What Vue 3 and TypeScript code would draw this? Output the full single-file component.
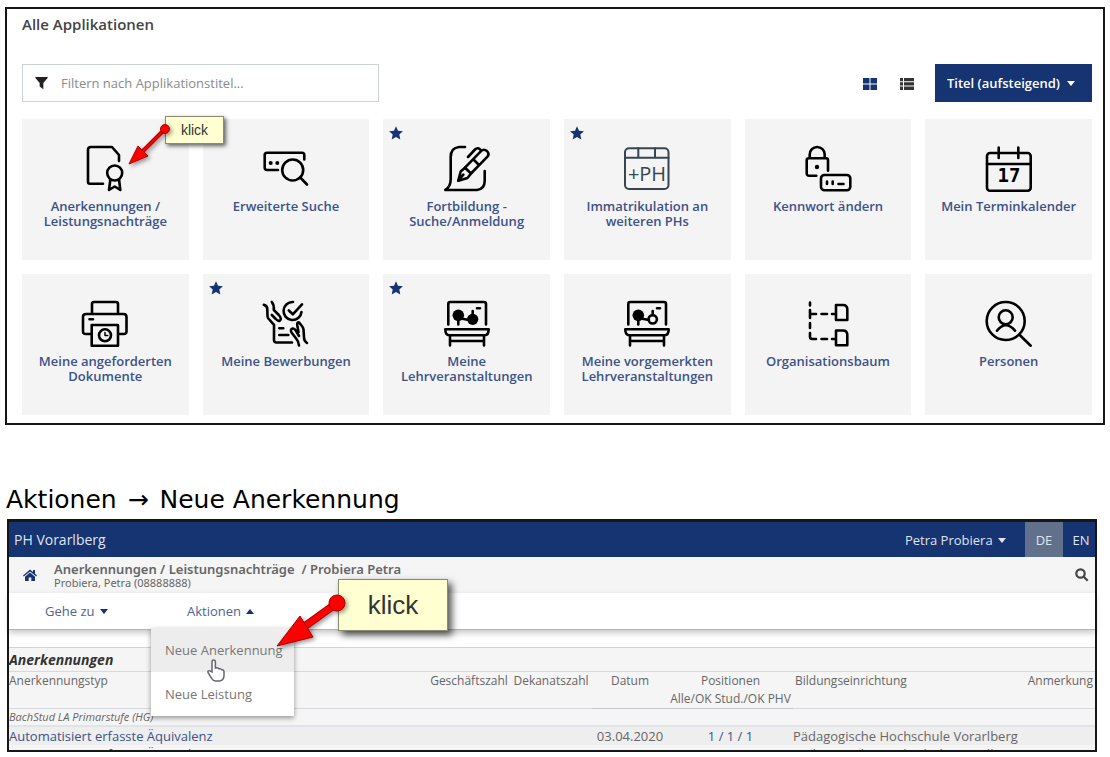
<script setup lang="ts">
import { ref } from 'vue'

interface App {
  icon: string
  lines: string[]
  favourite?: boolean
}

const apps: App[] = [
  { icon: 'certificate', lines: ['Anerkennungen /', 'Leistungsnachträge'] },
  { icon: 'search', lines: ['Erweiterte Suche'] },
  { icon: 'pen', lines: ['Fortbildung -', 'Suche/Anmeldung'], favourite: true },
  { icon: 'ph', lines: ['Immatrikulation an', 'weiteren PHs'], favourite: true },
  { icon: 'lock', lines: ['Kennwort ändern'] },
  { icon: 'calendar', lines: ['Mein Terminkalender'] },
  { icon: 'printer', lines: ['Meine angeforderten', 'Dokumente'] },
  { icon: 'hands', lines: ['Meine Bewerbungen'], favourite: true },
  { icon: 'board', lines: ['Meine', 'Lehrveranstaltungen'], favourite: true },
  { icon: 'board-marked', lines: ['Meine vorgemerkten', 'Lehrveranstaltungen'] },
  { icon: 'tree', lines: ['Organisationsbaum'] },
  { icon: 'person', lines: ['Personen'] },
]

const filter = ref('')
const sort = ref('asc')
</script>

<template>
  <main class="page">
    <section class="panel apps">
      <h1 class="apps-title">Alle Applikationen</h1>
      <div class="toolbar">
        <label class="filter">
          <svg class="funnel" viewBox="0 0 14 14" aria-hidden="true"><path d="M.4.6h13.2v1L9 7v6.6L5 10.800V7L.4 1.600z" /></svg>
          <input v-model="filter" type="text" placeholder="Filtern nach Applikationstitel..." aria-label="Filtern nach Applikationstitel" />
        </label>
        <button class="view active" type="button" aria-label="Kachelansicht">
          <svg viewBox="0 0 14 12"><path d="M0 0h6.500v5.500H0zM7.500 0H14v5.500H7.500zM0 6.500h6.500V12H0zM7.500 6.500H14V12H7.500z" /></svg>
        </button>
        <button class="view" type="button" aria-label="Listenansicht">
          <svg viewBox="0 0 14 12"><path d="M0 0h3v3.300H0zM4 0h10v3.300H4zM0 4.300h3v3.300H0zM4 4.300h10v3.300H4zM0 8.600h3V12H0zM4 8.600h10V12H4z" /></svg>
        </button>
        <div class="sort">
          <select v-model="sort" aria-label="Sortierung">
            <option value="asc">Titel (aufsteigend)</option>
            <option value="desc">Titel (absteigend)</option>
          </select>
          <svg class="caret" viewBox="0 0 8 5" aria-hidden="true"><path d="M0 0h8L4 5z" /></svg>
        </div>
      </div>

      <div class="tiles">
        <div v-for="(app, i) in apps" :key="app.icon" class="tile-wrap">
          <a class="tile" href="#">
            <svg v-if="app.favourite" class="star" viewBox="0 0 14 14" aria-hidden="true">
              <path d="M7 .2l2 4.500 4.900.5-3.600 3.300 1 4.900L7 11l-4.300 2.400 1-4.900L.1 5.200 5 4.700z" />
            </svg>
            <svg class="icon" viewBox="0 0 48 48" aria-hidden="true">
              <g v-if="app.icon === 'certificate'">
                <path d="M22 38.700H9Q7 38.700 7 36.700V5Q7 2 10 2h21l7 8v6" />
                <circle cx="33.700" cy="28" r="7.500" />
                <path d="M29.300 35L28 45l5.700-3.500L39.300 45l-1.200-10" />
              </g>
              <g v-else-if="app.icon === 'search'">
                <path d="M16 25H5Q2.700 25 2.700 22.700V10Q2.700 7.700 5 7.700h35q2.300 0 2.300 2.300v4.500" />
                <circle class="solid" cx="8.700" cy="18" r="2" /><circle class="solid" cx="15.300" cy="18" r="2" />
                <circle cx="30.700" cy="25" r="10.500" /><path d="M38.200 32.500L45 39.500" />
              </g>
              <g v-else-if="app.icon === 'pen'">
                <path d="M22 2h-6Q7.700 3 7.700 12v22q0 8-5.400 11H34q7.700-1 7.700-9V26" />
                <path d="M15.300 35.700l2.400-9.200 4.300-3.800 6 5.800-3.500 4.500z" />
                <path d="M22 22.700l16-16.500q3-3 6 0t0 6L28 28.500M25 12l7-7.500q3-3 6 1M30.500 14.500l5.500 5.500M15.300 35.700l5-6" />
              </g>
              <g v-else-if="app.icon === 'ph'" class="slate">
                <rect x="2" y="3.300" width="43.500" height="40.700" rx="4" /><path d="M2 12.700h43.500M15.300 3.300v9.400M32 3.300v9.400" />
                <text x="24" y="36" font-size="20">+PH</text>
              </g>
              <g v-else-if="app.icon === 'lock'">
                <path d="M5.700 13V9.500a7.500 7.500 0 0 1 15 0V13M12.300 30.700H5.200q-2.500 0-2.500-2.500v-13q0-1.900 2-1.900h17.500q1.800 0 1.800 1.900v10.500" />
                <circle class="solid" cx="13" cy="22" r="2.200" />
                <rect x="17" y="30" width="29.300" height="15.300" rx="3.500" />
                <path d="M23 36.500v2.500M28.700 36.500v2.500M34.500 39h5" />
              </g>
              <g v-else-if="app.icon === 'calendar'">
                <rect x="2" y="8" width="43.700" height="37.700" rx="3" /><path d="M2 19h43.700M13.700 2.500v10.500M33.300 2.500v10.500" />
                <text class="day" x="24" y="37" font-size="19">17</text>
              </g>
              <g v-else-if="app.icon === 'printer'">
                <path d="M11 13.500V4q0-2 2-2h22q2 0 2 2v9.500M10.500 34H4.800Q2 34 2 31.500V17q0-3 3-3h37.500q3 0 3 3v14.500q0 2.500-2.800 2.500h-5.200M8.500 19.300H12" />
                <path d="M10.700 25H37v20.700H10.700z" /><circle cx="24" cy="35.300" r="6" /><path class="thin" d="M24 32.500v3h2.700" />
              </g>
              <g v-else-if="app.icon === 'hands'">
                <path d="M1.800 4.800q3.500 1 3.500 4.500l.2 7q.3 2.500 2.500 4l4 4.500M9.800 2q2.500 3 2 8l5 5q3.500 4 1 5.700-2 .6-4-1.700l-4-4M12 24.500V40q0 2.500 2.500 2.500H30M17.300 28.300h4M17.300 35h9" />
                <path d="M31 2A9 9 0 1 0 39.500 12M26.800 10.500l4 3.800L40 4.300" />
                <path d="M45 43q-3-2-3-5.500l-.5-8q-.2-2-2-4l-2.600-3.300q-2 0-1.600 3l1.200 7M37 45.500q-.3-4-2.500-6.500l-5-6.500q-1.500-3 1-4 1.800-.4 3.300 2l3.200 5.500" />
              </g>
              <g v-else-if="app.icon === 'board' || app.icon === 'board-marked'">
                <path d="M5.300 24.500V4q0-2 2-2H41q2 0 2 2v20.500M34 8.300h3M15.300 15v9.500M18 18.500l8 1.500M29.700 11v4" />
                <circle class="solid" cx="15.300" cy="15.300" r="5.800" />
                <circle v-if="app.icon === 'board'" class="solid" cx="29.700" cy="19.300" r="5.600" />
                <circle v-else cx="29.700" cy="19.300" r="4.200" />
                <path d="M2.300 29.300h43.400q0 6-4 6H6.300q-4 0-4-6zM7 35.500v10M41 35.500v10M7 41h34" />
              </g>
              <g v-else-if="app.icon === 'tree'">
                <path d="M6 2.500v3M6 10v8M6 23v5M6 33v4q0 2 2.500 2H12M6.500 14H12M17.500 14h5.500M28 14h2.500M17.500 39h5.500M28 39h2.500" />
                <path d="M32 5h7q4.300 0 4.300 4.300V20H32zM32 30.500h7q4.300 0 4.300 4.300v10.500H32z" />
              </g>
              <g v-else>
                <circle cx="20.700" cy="21" r="19" /><circle cx="20.700" cy="17.300" r="7" />
                <path d="M34.700 35l11 10.700M12 30.700q8.800-11 18 0" />
              </g>
            </svg>
            <span class="name"><template v-for="(line, n) in app.lines" :key="line"><br v-if="n" />{{ line }}</template></span>
          </a>
          <div v-if="i === 0" class="hint small">
            <span class="note">klick</span>
            <svg class="arrow" viewBox="0 0 48 48" aria-hidden="true">
              <path class="edge" d="M40 9L18 31" /><path class="line" d="M40 9L18 31" /><path class="head" d="M4 44l9-18 10 10z" /><circle cx="40" cy="9" r="4.500" />
            </svg>
          </div>
        </div>
      </div>
    </section>

    <h2 class="step">Aktionen <span class="to">→</span> Neue Anerkennung</h2>

    <section class="panel detail">
      <header class="topbar">
        <span class="brand">PH Vorarlberg</span>
        <button class="user" type="button">Petra Probiera <svg class="caret" viewBox="0 0 8 5"><path d="M0 0h8L4 5z" /></svg></button>
        <button class="lang current" type="button">DE</button>
        <button class="lang" type="button">EN</button>
      </header>
      <div class="crumbs">
        <a class="home" href="#" aria-label="Startseite">
          <svg viewBox="0 0 14 12"><path d="M7 .5L10 3V1h2v3.800l2 1.700-.8 1L7 2.400.800 7.500l-.8-1zM7 3.600l5 4.100V12H8.300V8.500H5.700V12H2V7.700z" /></svg>
        </a>
        <div class="crumb-text">
          <strong>Anerkennungen / Leistungsnachträge&nbsp; / Probiera Petra</strong>
          <span>Probiera, Petra (08888888)</span>
        </div>
        <button class="find" type="button" aria-label="Suchen">
          <svg viewBox="0 0 14 14"><circle cx="5.500" cy="5.500" r="4.200" /><path d="M8.700 8.700l4 4" /></svg>
        </button>
      </div>
      <nav class="menu">
        <button class="goto" type="button">Gehe zu <svg class="caret" viewBox="0 0 8 5"><path d="M0 0h8L4 5z" /></svg></button>
        <div class="actions">
          <button type="button" aria-expanded="true">Aktionen <svg class="caret" viewBox="0 0 8 5"><path d="M0 5h8L4 0z" /></svg></button>
          <div class="dropdown">
            <a class="hover" href="#">Neue Anerkennung</a>
            <a href="#">Neue Leistung</a>
            <svg class="cursor" viewBox="0 0 18 23" aria-hidden="true">
              <path d="M5 13V3q0-2 1.700-2t1.700 2v6q3-.8 3.500.8 2.300-.5 2.800 1 2-.2 2.300 1.500v4q0 5.200-4.500 5.700H8.500q-2.500 0-3.800-2.500L1 13.500q-.5-2 1.500-1.800z" />
            </svg>
          </div>
        </div>
        <div class="hint large">
          <span class="note">klick</span>
          <svg class="arrow" viewBox="0 0 84 64" aria-hidden="true">
            <path class="edge" d="M69 13L33 39" /><path class="line" d="M69 13L33 39" /><path class="head" d="M9 56l23-30 13 21z" /><circle cx="69" cy="13" r="8" />
          </svg>
        </div>
      </nav>

      <table>
        <caption>Anerkennungen</caption>
        <colgroup>
          <col /><col class="c-num" /><col class="c-num" /><col class="c-date" /><col class="c-pos" /><col class="c-inst" /><col class="c-note" />
        </colgroup>
        <thead>
          <tr>
            <th class="left">Anerkennungstyp</th>
            <th>Geschäftszahl</th>
            <th>Dekanatszahl</th>
            <th class="dark">Datum</th>
            <th class="dark">Positionen<br />Alle/OK Stud./OK PHV</th>
            <th class="left">Bildungseinrichtung</th>
            <th class="right">Anmerkung</th>
          </tr>
        </thead>
        <tbody>
          <tr class="group"><td colspan="7">BachStud LA Primarstufe (HG)</td></tr>
          <tr class="entry">
            <td><a href="#">Automatisiert erfasste Äquivalenz</a></td><td></td><td></td>
            <td class="mid">03.04.2020</td>
            <td class="mid"><a href="#">1 / 1 / 1</a></td>
            <td colspan="2">Pädagogische Hochschule Vorarlberg</td>
          </tr>
          <tr class="cut">
            <td><div><a href="#">Automatisiert erfasste Äquivalenz</a></div></td><td></td><td></td>
            <td class="mid"><div>03.04.2020</div></td>
            <td class="mid"><div><a href="#">1 / 1 / 1</a></div></td>
            <td colspan="2"><div>Pädagogische Hochschule Vorarlberg</div></td>
          </tr>
        </tbody>
      </table>
    </section>
  </main>
</template>

<style>
body {
  margin: 0;
  background: #fff;
}
</style>

<style scoped>
* {
  box-sizing: border-box;
}
.page {
  padding: 7px 5px 6px;
  font-family: 'Open Sans', 'Noto Sans', sans-serif;
  font-size: 13px;
  color: #444;
}
button,
input,
select {
  font: inherit;
  color: inherit;
  border: 0;
  background: none;
  padding: 0;
}
a {
  color: #3d5288;
  text-decoration: none;
}
svg {
  display: block;
  flex: none;
}
.panel {
  border: 2px solid #161616;
}
.apps {
  padding: 4px 11px 8px 15px;
}
.apps-title {
  margin: 0;
  font-size: 15px;
  line-height: 22px;
  font-weight: 600;
  color: #444;
}
.toolbar {
  display: flex;
  align-items: center;
  height: 38px;
  margin: 29px 0 17px;
}
.filter {
  display: flex;
  align-items: center;
  width: 357px;
  height: 38px;
  margin-right: auto;
  padding-left: 12px;
  gap: 13px;
  border: 1px solid #cdd2d7;
}
.filter input {
  flex: 1;
  min-width: 0;
  outline: 0;
}
.filter input::placeholder {
  color: #8b8b8b;
  opacity: 1;
}
.funnel {
  width: 13px;
  height: 14px;
  fill: #222;
}
.view {
  margin-right: 23px;
  padding-top: 2px;
  fill: #333;
}
.view + .sort {
  margin-left: -2px;
}
.view svg {
  width: 14px;
  height: 12px;
}
.view.active {
  fill: #163372;
}
.sort {
  position: relative;
  height: 38px;
  background: #163372;
  color: #fff;
}
.sort select {
  height: 38px;
  padding: 0 32px 0 12px;
  appearance: none;
  font-weight: 600;
}
.sort option {
  color: #222;
}
.caret {
  display: inline-block;
  width: 8px;
  height: 5px;
  fill: currentColor;
}
.sort .caret {
  position: absolute;
  right: 17px;
  top: 17px;
  pointer-events: none;
}
.tiles {
  display: grid;
  grid-template-columns: repeat(6, 1fr);
  gap: 14px;
}
.tile-wrap {
  position: relative;
}
.tile {
  display: flex;
  flex-direction: column;
  align-items: center;
  gap: 6px;
  min-height: 141px;
  padding: 26px 4px 8px;
  background: #f4f4f4;
  text-align: center;
}
.name {
  line-height: 15px;
  font-weight: 600;
}
.star {
  position: absolute;
  left: 6px;
  top: 7px;
  width: 14px;
  height: 14px;
  fill: #163372;
}
.icon {
  width: 48px;
  height: 48px;
  fill: none;
  stroke: #000;
  stroke-width: 2.600;
  stroke-linecap: round;
  stroke-linejoin: round;
}
.icon .solid {
  fill: #000;
  stroke: none;
}
.icon .thin {
  stroke-width: 1.500;
}
.icon .slate {
  stroke: #36454f;
  stroke-width: 2;
}
.icon text {
  fill: #36454f;
  stroke: none;
  text-anchor: middle;
  font-weight: 500;
}
.icon .day {
  fill: #000;
  font-family: 'DejaVu Sans Mono', monospace;
  font-weight: 700;
}
.hint {
  position: absolute;
  z-index: 3;
}
.hint.small {
  left: 143px;
  top: -3px;
}
.hint.large {
  left: 329px;
  top: -14px;
}
.note {
  display: flex;
  align-items: center;
  justify-content: center;
  border: 1px solid #8a8a72;
  background: #ffffd2;
  color: #333;
  font-family: 'Liberation Sans', Arial, sans-serif;
}
.small .note {
  width: 59px;
  height: 28px;
  font-size: 14px;
  box-shadow: 2px 2px 4px rgba(0, 0, 0, 0.6);
}
.large .note {
  width: 110px;
  height: 52px;
  font-size: 26px;
  box-shadow: 4px 4px 7px rgba(0, 0, 0, 0.65);
}
.arrow {
  position: absolute;
  fill: #f00;
  stroke: #a80000;
  stroke-width: 1;
  filter: drop-shadow(2px 2px 2px rgba(0, 0, 0, 0.4));
}
.arrow .edge {
  stroke-width: 4;
}
.arrow .line {
  stroke: #f00;
  stroke-width: 2;
}
.small .arrow {
  left: -40px;
  top: 4px;
  width: 48px;
  height: 48px;
}
.large .arrow {
  left: -70px;
  top: 11px;
  width: 84px;
  height: 64px;
}
.large .arrow .edge {
  stroke-width: 8;
}
.large .arrow .line {
  stroke-width: 6;
}
.step {
  margin: 58px 0 3px 1px;
  font-family: 'DejaVu Sans', sans-serif;
  font-size: 25px;
  line-height: 33px;
  font-weight: 400;
  color: #000;
}
.to {
  margin: 0 3px;
}
.detail {
  margin: 0 8px 0 2px;
  border-top-width: 3px;
}
.topbar {
  display: flex;
  align-items: stretch;
  height: 35px;
  background: #163372;
  color: #dfe4ee;
}
.brand {
  margin-right: auto;
  padding-left: 5px;
  font-size: 14px;
  line-height: 35px;
}
.user {
  margin-right: 19px;
  font-weight: 500;
}
.user .caret,
.menu .caret {
  margin: 0 0 2px 2px;
}
.lang {
  width: 38px;
}
.lang.current {
  background: #61718c;
}
.lang:last-child {
  width: 32px;
  padding-left: 4px;
}
.crumbs {
  display: flex;
  align-items: center;
  height: 36px;
  padding: 0 6px 0 14px;
  background: #f5f5f5;
}
.home svg {
  width: 14px;
  height: 12px;
  fill: #163372;
}
.crumb-text {
  display: flex;
  flex-direction: column;
  margin: 0 auto 0 17px;
  font-family: 'Noto Sans', 'Open Sans', sans-serif;
  font-size: 11px;
  line-height: 13px;
  color: #666;
}
.crumb-text strong {
  font-size: 13px;
  line-height: 14px;
  font-weight: 600;
}
.find svg {
  width: 14px;
  height: 14px;
  fill: none;
  stroke: #444;
  stroke-width: 2.200;
}
.menu {
  position: relative;
  display: flex;
  height: 37px;
  background: #fff;
  color: #53638c;
  border-bottom: 1px solid #b4b4b4;
  box-shadow: 0 3px 6px rgba(0, 0, 0, 0.22);
}
.menu button {
  height: 36px;
}
.menu .caret {
  fill: #163372;
}
.goto {
  width: 142px;
  padding-left: 36px;
  text-align: left;
}
.actions {
  position: relative;
}
.actions button {
  padding-left: 36px;
}
.dropdown {
  position: absolute;
  left: 0;
  top: 35px;
  width: 143px;
  z-index: 2;
  background: #fff;
  box-shadow: 0 2px 5px rgba(0, 0, 0, 0.4);
}
.dropdown a {
  display: block;
  padding: 0 14px;
  line-height: 44px;
  color: #777;
  white-space: nowrap;
}
.dropdown .hover {
  background: #ededed;
}
.cursor {
  position: absolute;
  left: 56px;
  top: 31px;
  width: 18px;
  height: 23px;
  fill: #fff;
  stroke: #667;
  stroke-width: 1.500;
}
table {
  width: 100%;
  margin-top: 17px;
  table-layout: fixed;
  border-collapse: collapse;
  background: #f5f5f5;
  font-size: 12px;
  color: #666;
}
caption {
  border-top: 1px solid #d0d4d8;
  background: #f5f5f5;
  text-align: left;
  font-size: 14px;
  line-height: 23px;
  font-weight: 700;
  font-style: italic;
  color: #333;
}
.c-num {
  width: 82px;
}
.c-date {
  width: 76px;
}
.c-pos {
  width: 125px;
}
.c-inst {
  width: 215px;
}
.c-note {
  width: 87px;
}
th {
  padding: 0;
  border-top: 1px solid #d6dade;
  border-bottom: 1px solid #d6dade;
  font-weight: 400;
  line-height: 18px;
  vertical-align: top;
  white-space: nowrap;
}
th.dark {
  border-bottom-color: #c4c8cc;
}
.left {
  text-align: left;
}
th.left:nth-child(6) {
  padding-left: 2px;
}
.right {
  padding-right: 2px;
  text-align: right;
}
td {
  padding: 0;
  font-size: 13px;
  line-height: 18px;
  white-space: nowrap;
}
.group td {
  border-bottom: 2px solid #e0e4e8;
  font-size: 11px;
  line-height: 16px;
  font-style: italic;
}
.entry {
  background: #eee;
}
.mid {
  text-align: center;
}
.cut div {
  height: 5px;
  line-height: 18px;
  overflow: hidden;
}
</style>
